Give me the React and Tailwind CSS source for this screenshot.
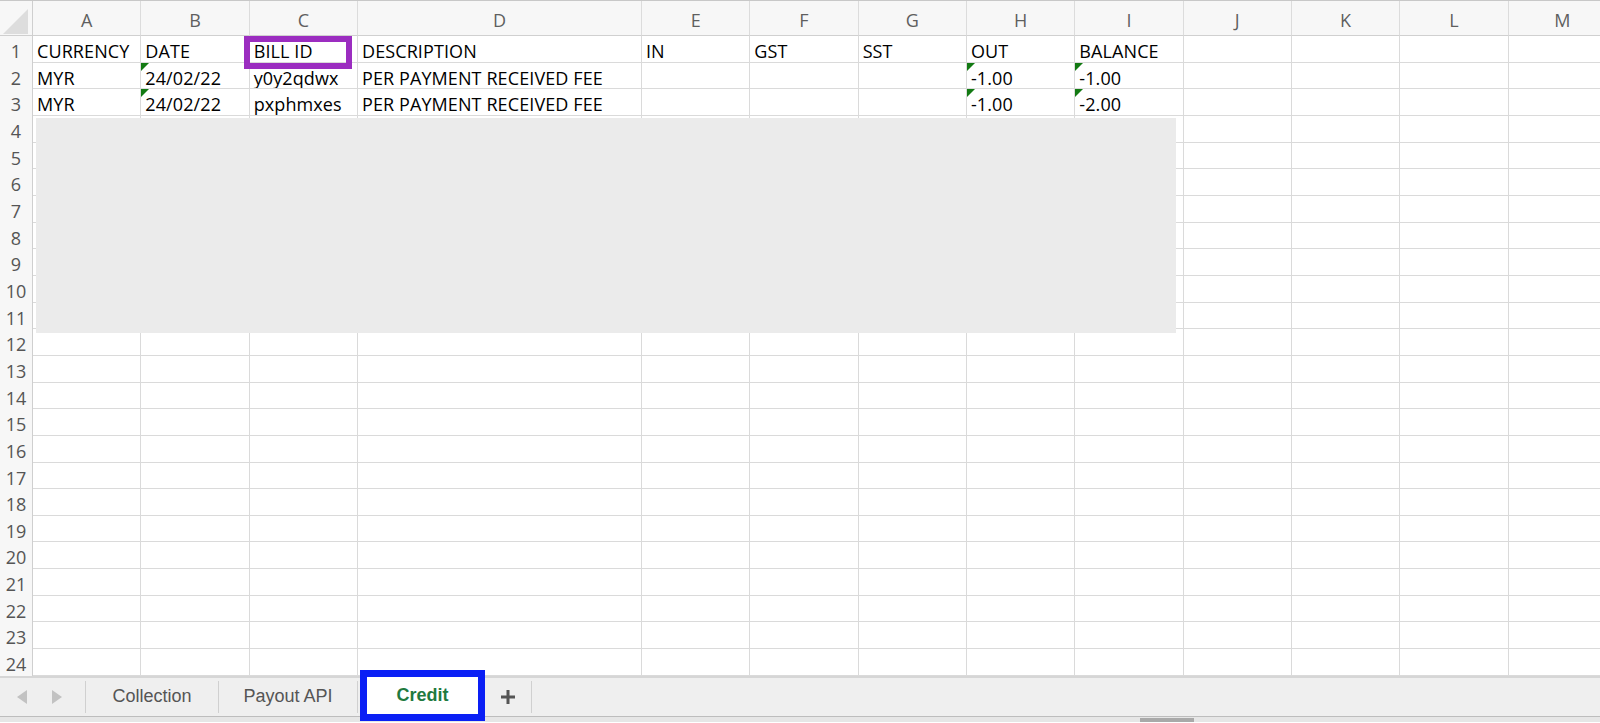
const COLS = ['A', 'B', 'C', 'D', 'E', 'F', 'G', 'H', 'I', 'J', 'K', 'L', 'M'];

const ROWS = {
  1: ['CURRENCY', 'DATE', 'BILL ID', 'DESCRIPTION', 'IN', 'GST', 'SST', 'OUT', 'BALANCE'],
  2: ['MYR', '24/02/22', 'y0y2qdwx', 'PER PAYMENT RECEIVED FEE', '', '', '', '-1.00', '-1.00'],
  3: ['MYR', '24/02/22', 'pxphmxes', 'PER PAYMENT RECEIVED FEE', '', '', '', '-1.00', '-2.00'],
};

// columns holding numbers stored as text (green corner flag)
const FLAGGED = [1, 7, 8];

function Cell({ text, flag }) {
  return (
    <div className="relative border-r border-b border-[#dadada] pl-[4px] pt-[3px] leading-[24px] whitespace-nowrap overflow-hidden text-black tracking-[0.1px]">
      {flag && (
        <span className="absolute top-0 left-0 w-0 h-0 border-t-[8px] border-r-[8px] border-t-[#137a13] border-r-transparent" />
      )}
      {text}
    </div>
  );
}

function Grid() {
  const rows = [];
  for (let r = 1; r <= 24; r++) {
    const vals = ROWS[r] || [];
    rows.push(
      <div key={`rh${r}`} className="bg-[#f7f7f7] border-r border-[#cfcfcf] text-center pt-[3px] leading-[24px] text-[#555]">
        {r}
      </div>
    );
    COLS.forEach((c, i) => {
      rows.push(
        <Cell key={`${c}${r}`} text={vals[i] || ''} flag={(r === 2 || r === 3) && FLAGGED.includes(i)} />
      );
    });
  }

  return (
    <div className="relative border-t border-[#c8c8c8]">
      <div className="grid grid-cols-[33px_repeat(3,108.33px)_284px_repeat(9,108.33px)] grid-rows-[35px_repeat(24,26.667px)] overflow-hidden">
        {/* select-all corner */}
        <div className="bg-[#f7f7f7] border-r border-b border-[#cfcfcf] relative">
          <svg className="absolute left-[3px] top-[8px]" width="25" height="25" viewBox="0 0 25 25">
            <polygon points="25,0 25,25 0,25" fill="#dddddd" />
          </svg>
        </div>
        {COLS.map((c) => (
          <div key={c} className="bg-[#f7f7f7] border-r border-b border-[#d0d0d0] border-r-[#dcdcdc] text-center pt-[7px] leading-[normal] text-[#5f5f5f]">
            {c}
          </div>
        ))}
        {rows}
      </div>

      {/* hidden rows block */}
      <div className="absolute left-[36px] top-[117px] w-[1140px] h-[215px] bg-[#ebebeb]" />
      {/* highlight around BILL ID */}
      <div className="absolute left-[244px] top-[35px] w-[108px] h-[33px] border-[6px] border-[#9b2dc0]" />
    </div>
  );
}

function TabBar() {
  return (
    <div className="relative">
      <div className="flex h-[40px] bg-[#efefef] border-t-2 border-[#d6d6d6] font-['Liberation_Sans',Arial,sans-serif] text-[18px] text-[#555]">
        <div className="w-[85px] flex items-center pl-[17px] gap-[25px] shrink-0">
          <svg width="10" height="14" viewBox="0 0 10 14">
            <polygon points="10,0 10,14 0,7" fill="#c2c2c2" />
          </svg>
          <svg width="10" height="14" viewBox="0 0 10 14">
            <polygon points="0,0 0,14 10,7" fill="#c2c2c2" />
          </svg>
        </div>
        <div className="w-[133px] shrink-0 flex items-center justify-center border-l border-[#d0d0d0] my-[3px]">
          Collection
        </div>
        <div className="w-[140px] shrink-0 flex items-center justify-center border-l border-r border-[#d0d0d0] my-[3px]">
          Payout API
        </div>
        <div className="ml-[2px] -mt-[8px] h-[51px] w-[125px] shrink-0 border-[7px] border-[#0a1ff5] bg-white flex items-center justify-center font-bold text-[#1f7a3f] relative z-10">
          Credit
        </div>
        <div className="w-[47px] shrink-0 flex items-center justify-center border-r border-[#d0d0d0] my-[3px]">
          <svg width="16" height="16" viewBox="0 0 16 16">
            <path d="M8 1v14M1 8h14" stroke="#555" strokeWidth="3" />
          </svg>
        </div>
        <div className="flex-1" />
      </div>
      <div className="h-[6px] bg-[#e6e6e6] border-t border-[#bdbdbd] flex">
        <div className="ml-[1140px] w-[54px] bg-[#a9a9a9] mt-[1px]" />
      </div>
    </div>
  );
}

export default function App() {
  return (
    <div className="w-[1600px] h-[723px] overflow-hidden bg-white font-['Open_Sans',sans-serif] text-[18px]">
      <Grid />
      <TabBar />
    </div>
  );
}
